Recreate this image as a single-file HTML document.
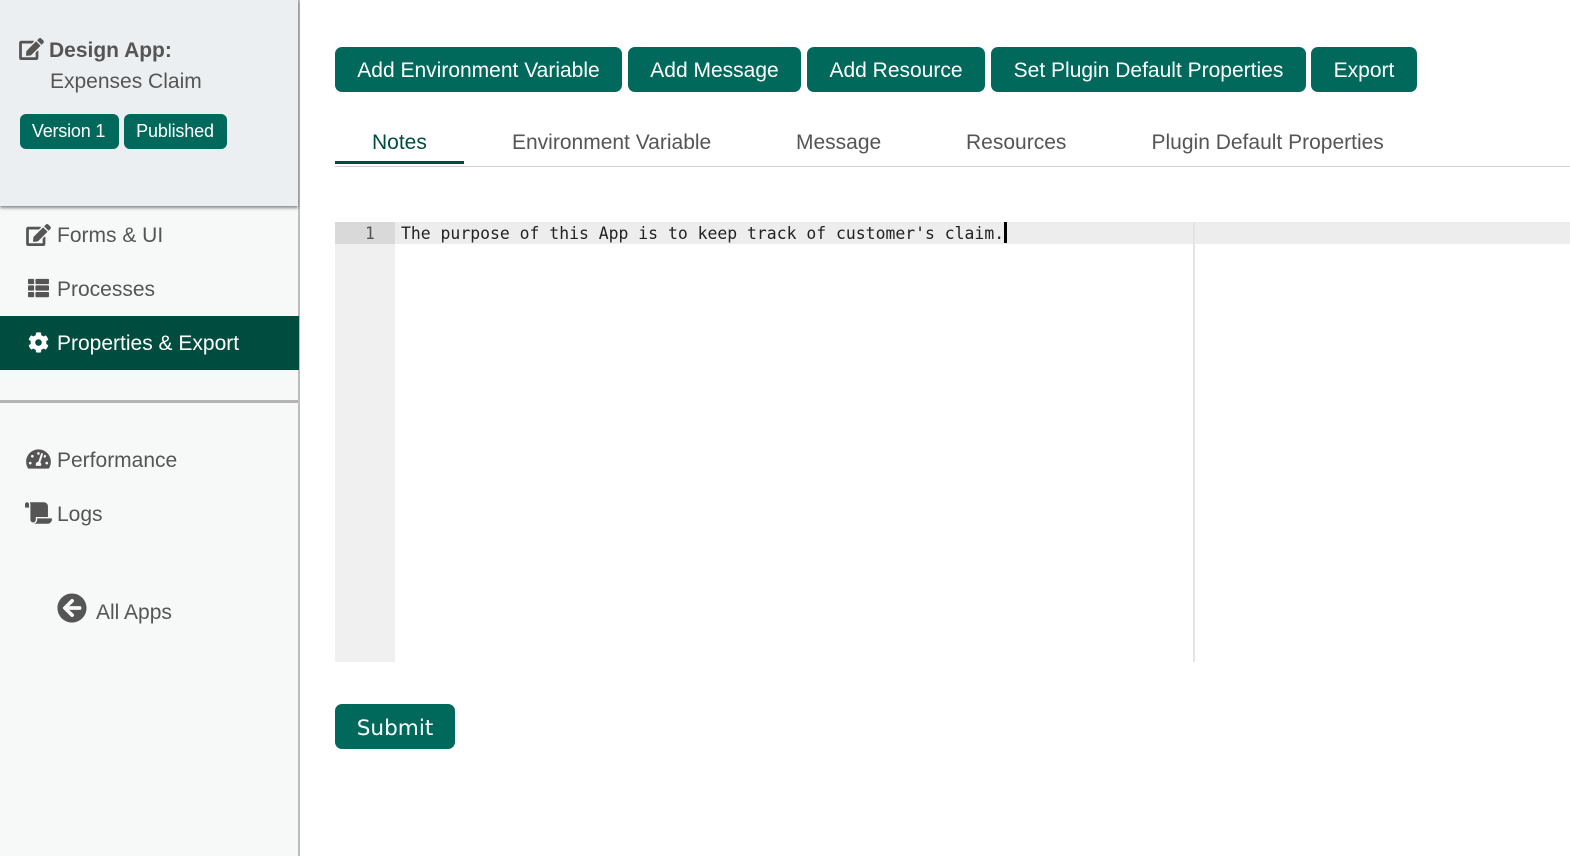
<!DOCTYPE html>
<html><head><meta charset="utf-8"><style>
html,body{margin:0;padding:0;width:1570px;height:856px;overflow:hidden;background:#fff}
body{position:relative;font-family:"Liberation Sans",Arial,sans-serif;color:#555}
.a{position:absolute;white-space:nowrap}
.t{position:absolute;white-space:nowrap;line-height:24px;height:24px}
.btn{position:absolute;top:47px;height:45px;line-height:47px;background:#00695c;color:#fff;border-radius:7px;font-size:21px;text-align:center;white-space:nowrap}
.nav{font-size:21px;color:#555}
.tab{position:absolute;top:131px;font-size:21px;line-height:24px;color:#555;white-space:nowrap}
svg{position:absolute;fill:#555}
</style></head><body>
<div class="a" style="left:0;top:0;width:298px;height:856px;background:#f7f9f9"></div>
<div class="a" style="left:298px;top:0;width:2px;height:856px;background:#bdbdbd"></div>
<div class="a" style="left:0;top:0;width:298px;height:206px;background:#eceff1;box-shadow:0 2px 3px rgba(0,0,0,.45)"></div>

<svg style="left:19px;top:38px" width="25" height="22" viewBox="0 0 576 512"><path d="M402.6 83.2l90.2 90.2c3.8 3.8 3.8 10 0 13.8L274.4 405.6l-92.8 10.3c-12.4 1.4-22.9-9.1-21.5-21.5l10.3-92.8L388.8 83.2c3.8-3.8 10-3.8 13.8 0zm162-22.9l-48.8-48.8c-15.2-15.2-39.9-15.2-55.2 0l-35.4 35.4c-3.8 3.8-3.8 10 0 13.8l90.2 90.2c3.8 3.8 10 3.8 13.8 0l35.4-35.4c15.2-15.3 15.2-40 0-55.2zM384 346.2V448H64V128h229.8c3.2 0 6.2-1.3 8.5-3.5l40-40c7.6-7.6 2.2-20.5-8.5-20.5H48C21.5 64 0 85.5 0 112v352c0 26.5 21.5 48 48 48h352c26.5 0 48-21.5 48-48V306.2c0-10.7-12.9-16-20.5-8.5l-40 40c-2.2 2.3-3.5 5.3-3.5 8.5z"/></svg>
<div class="t" style="left:49px;top:39px;font-size:21px;font-weight:bold">Design App:</div>
<div class="t" style="left:50px;top:70px;font-size:21px">Expenses Claim</div>
<div class="a" style="left:20px;top:114px;width:99px;height:35px;line-height:34px;background:#00695c;color:#fff;border-radius:6px;font-size:18px;text-align:center;letter-spacing:-.2px;text-indent:-2px">Version 1</div>
<div class="a" style="left:124px;top:114px;width:103px;height:35px;line-height:34px;background:#00695c;color:#fff;border-radius:6px;font-size:18px;text-align:center;letter-spacing:-.15px;text-indent:-1px">Published</div>

<svg style="left:26px;top:224px" width="25" height="22" viewBox="0 0 576 512"><path d="M402.6 83.2l90.2 90.2c3.8 3.8 3.8 10 0 13.8L274.4 405.6l-92.8 10.3c-12.4 1.4-22.9-9.1-21.5-21.5l10.3-92.8L388.8 83.2c3.8-3.8 10-3.8 13.8 0zm162-22.9l-48.8-48.8c-15.2-15.2-39.9-15.2-55.2 0l-35.4 35.4c-3.8 3.8-3.8 10 0 13.8l90.2 90.2c3.8 3.8 10 3.8 13.8 0l35.4-35.4c15.2-15.3 15.2-40 0-55.2zM384 346.2V448H64V128h229.8c3.2 0 6.2-1.3 8.5-3.5l40-40c7.6-7.6 2.2-20.5-8.5-20.5H48C21.5 64 0 85.5 0 112v352c0 26.5 21.5 48 48 48h352c26.5 0 48-21.5 48-48V306.2c0-10.7-12.9-16-20.5-8.5l-40 40c-2.2 2.3-3.5 5.3-3.5 8.5z"/></svg>
<div class="t nav" style="left:57px;top:224px">Forms &amp; UI</div>

<svg style="left:28px;top:277px" width="21" height="22" viewBox="0 0 512 512"><path d="M149.333 216v80c0 13.255-10.745 24-24 24H24c-13.255 0-24-10.745-24-24v-80c0-13.255 10.745-24 24-24h101.333c13.255 0 24 10.745 24 24zM0 376v80c0 13.255 10.745 24 24 24h101.333c13.255 0 24-10.745 24-24v-80c0-13.255-10.745-24-24-24H24c-13.255 0-24 10.745-24 24zM125.333 32H24C10.745 32 0 42.745 0 56v80c0 13.255 10.745 24 24 24h101.333c13.255 0 24-10.745 24-24V56c0-13.255-10.745-24-24-24zm80 448H488c13.255 0 24-10.745 24-24v-80c0-13.255-10.745-24-24-24H205.333c-13.255 0-24 10.745-24 24v80c0 13.255 10.745 24 24 24zm-24-424v80c0 13.255 10.745 24 24 24H488c13.255 0 24-10.745 24-24V56c0-13.255-10.745-24-24-24H205.333c-13.255 0-24 10.745-24 24zm24 264H488c13.255 0 24-10.745 24-24v-80c0-13.255-10.745-24-24-24H205.333c-13.255 0-24 10.745-24 24v80c0 13.255 10.745 24 24 24z"/></svg>
<div class="t nav" style="left:57px;top:278px">Processes</div>

<div class="a" style="left:0;top:316px;width:299px;height:54px;background:#004d40"></div>
<svg style="left:28px;top:332px;fill:#fff" width="21" height="21" viewBox="0 0 512 512"><path d="M487.4 315.7l-42.6-24.6c4.3-23.2 4.3-47 0-70.2l42.6-24.6c4.9-2.8 7.1-8.6 5.5-14-11.1-35.6-30-67.8-54.7-94.6-3.8-4.1-10-5.1-14.8-2.3L380.8 110c-17.9-15.4-38.5-27.3-60.8-35.1V25.8c0-5.6-3.9-10.5-9.4-11.7-36.7-8.2-74.3-7.8-109.2 0-5.5 1.2-9.4 6.1-9.4 11.7V75c-22.2 7.9-42.8 19.8-60.8 35.1L88.7 85.5c-4.9-2.8-11-1.9-14.8 2.3-24.7 26.7-43.6 58.9-54.7 94.6-1.7 5.4.6 11.2 5.5 14L67.3 221c-4.3 23.2-4.3 47 0 70.2l-42.6 24.6c-4.9 2.8-7.1 8.6-5.5 14 11.1 35.6 30 67.8 54.7 94.6 3.8 4.1 10 5.1 14.8 2.3l42.6-24.6c17.9 15.4 38.5 27.3 60.8 35.1v49.2c0 5.6 3.9 10.5 9.4 11.7 36.7 8.2 74.3 7.8 109.2 0 5.5-1.2 9.4-6.1 9.4-11.7v-49.2c22.2-7.9 42.8-19.8 60.8-35.1l42.6 24.6c4.9 2.8 11 1.9 14.8-2.3 24.7-26.7 43.6-58.9 54.7-94.6 1.5-5.5-.7-11.3-5.6-14.1zM256 336c-44.1 0-80-35.9-80-80s35.9-80 80-80 80 35.9 80 80-35.9 80-80 80z"/></svg>
<div class="t nav" style="left:57px;top:332px;color:#fff">Properties &amp; Export</div>

<div class="a" style="left:0;top:400px;width:298px;height:3px;background:#b4b4b4"></div>

<svg style="left:26px;top:448px" width="25" height="22" viewBox="0 0 576 512"><path d="M288 32C128.94 32 0 160.94 0 320c0 52.8 14.25 102.26 39.06 144.8 5.61 9.62 16.3 15.2 27.44 15.2h443c11.14 0 21.83-5.58 27.44-15.2C561.75 422.26 576 372.8 576 320c0-159.06-128.94-288-288-288zm0 64c14.71 0 26.58 10.13 30.32 23.65-1.11 2.26-2.64 4.23-3.45 6.67l-9.22 27.67c-5.13 3.49-10.97 6.01-17.64 6.01-17.67 0-32-14.33-32-32S270.33 96 288 96zM96 384c-17.67 0-32-14.33-32-32s14.33-32 32-32 32 14.33 32 32-14.33 32-32 32zm48-160c-17.67 0-32-14.33-32-32s14.33-32 32-32 32 14.33 32 32-14.33 32-32 32zm246.77-72.41l-61.33 184C343.13 347.33 352 364.54 352 384c0 11.72-3.38 22.55-8.88 32H232.88c-5.5-9.45-8.88-20.28-8.88-32 0-33.94 26.5-61.43 59.9-63.59l61.34-184.01c4.17-12.56 17.73-19.45 30.36-15.17 12.57 4.19 19.35 17.79 15.17 30.36zm14.66 57.2l15.52-46.55c3.47-1.29 7.13-2.23 11.05-2.23 17.67 0 32 14.33 32 32s-14.33 32-32 32c-11.38-.01-20.89-6.28-26.57-15.22zM480 384c-17.67 0-32-14.33-32-32s14.33-32 32-32 32 14.33 32 32-14.33 32-32 32z"/></svg>
<div class="t nav" style="left:57px;top:449px">Performance</div>

<svg style="left:25px;top:502px" width="27" height="22" viewBox="0 0 640 512"><path d="M48 0C21.53 0 0 21.53 0 48v64c0 8.84 7.16 16 16 16h80V48C96 21.53 74.47 0 48 0zm208 412.57V352h288V96c0-52.94-43.06-96-96-96H111.59C121.74 13.41 128 29.92 128 48v368c0 38.87 34.65 69.65 74.75 63.12C234.22 474 256 444.46 256 412.57zM288 384v32c0 52.93-43.06 96-96 96h336c61.86 0 112-50.14 112-112 0-8.84-7.16-16-16-16H288z"/></svg>
<div class="t nav" style="left:57px;top:503px">Logs</div>

<svg style="left:57px;top:593px" width="30" height="30" viewBox="0 0 512 512"><path d="M256 504C119 504 8 393 8 256S119 8 256 8s248 111 248 248-111 248-248 248zm28.9-143.6L209.4 288H392c13.3 0 24-10.7 24-24v-16c0-13.3-10.7-24-24-24H209.4l75.5-72.4c9.7-9.3 9.9-24.8.4-34.3l-11-10.9c-9.4-9.4-24.6-9.4-33.9 0L107.7 239c-9.4 9.4-9.4 24.6 0 33.9l132.7 132.7c9.4 9.4 24.6 9.4 33.9 0l11-10.9c9.5-9.5 9.3-25-.4-34.3z"/></svg>
<div class="t nav" style="left:96px;top:601px">All Apps</div>

<div class="btn" style="left:335px;width:287px">Add Environment Variable</div>
<div class="btn" style="left:628px;width:173px">Add Message</div>
<div class="btn" style="left:807px;width:178px">Add Resource</div>
<div class="btn" style="left:991px;width:315px">Set Plugin Default Properties</div>
<div class="btn" style="left:1311px;width:106px">Export</div>

<div class="tab" style="left:372px;color:#004d40">Notes</div>
<div class="tab" style="left:512px">Environment Variable</div>
<div class="tab" style="left:796px">Message</div>
<div class="tab" style="left:966px">Resources</div>
<div class="tab" style="left:1151.5px">Plugin Default Properties</div>
<div class="a" style="left:335px;top:166px;width:1235px;height:1px;background:#cfcfcf"></div>
<div class="a" style="left:335px;top:161px;width:129px;height:3px;background:#004d40"></div>

<div class="a" style="left:335px;top:222px;width:60px;height:440px;background:#f0f0f0"></div>
<div class="a" style="left:335px;top:222px;width:60px;height:22px;background:#d9d9d9"></div>
<div class="a" style="left:395px;top:222px;width:1175px;height:22px;background:#ededed"></div>
<div class="a" style="left:1193px;top:222px;width:2px;height:440px;background:#e4e4e4"></div>
<div class="a" style="left:365px;top:223px;line-height:22px;font-family:'DejaVu Sans Mono',monospace;font-size:16.4px;color:#555">1</div>
<div class="a" style="left:401px;top:223px;line-height:22px;font-family:'DejaVu Sans Mono',monospace;font-size:16.43px;color:#222">The purpose of this App is to keep track of customer's claim.</div>
<div class="a" style="left:1004px;top:222px;width:3px;height:21px;background:#000"></div>

<div class="a" style="left:335px;top:704px;width:120px;height:45px;line-height:49px;background:#00695c;color:#fff;border-radius:7px;font-size:21.6px;text-align:center;font-family:'DejaVu Sans',sans-serif">Submit</div>
</body></html>
